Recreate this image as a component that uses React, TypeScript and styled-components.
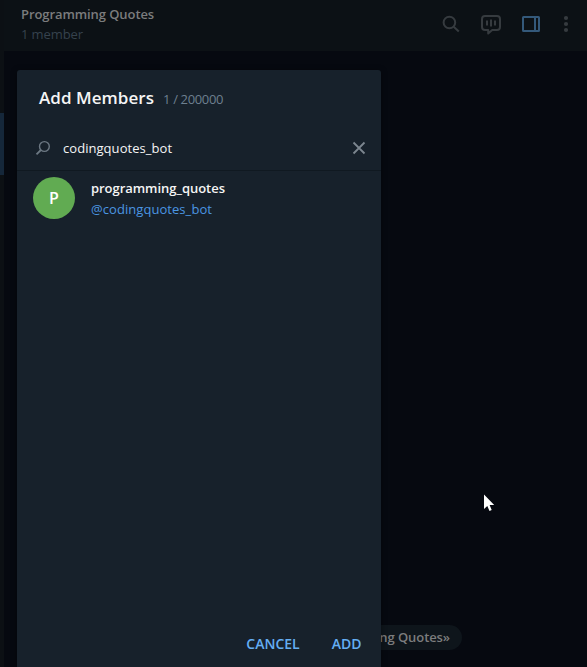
import React from 'react';
import styled, { createGlobalStyle } from 'styled-components';

const GlobalStyle = createGlobalStyle`
  *, *::before, *::after { box-sizing: border-box; }
  html, body { margin: 0; background: #060910; overflow: hidden; }
  body, button, input { font-family: 'Open Sans', 'Noto Sans', sans-serif; font-size: 13px; }
  button { border: 0; background: none; padding: 0; }
`;

const Window = styled.div`
  position: relative;
  display: flex;
  width: 587px;
  height: 667px;
  overflow: hidden;
  background: #060910;
`;

const ChatListEdge = styled.aside`
  width: 4px;
  padding-top: 113px;
  background: #0c1014;
`;

const SelectedChat = styled.div`
  height: 62px;
  background: #15273a;
`;

const Chat = styled.main`
  flex: 1;
  display: flex;
  flex-direction: column;
`;

const ChatHeader = styled.header`
  display: flex;
  justify-content: space-between;
  height: 51px;
  padding: 4px 6px 0 17px;
  background: #0c1115;
`;

const ChatTitle = styled.div`
  font-weight: 600;
  line-height: 20px;
  letter-spacing: -0.08px;
  color: #7b7c7d;
`;

const ChatStatus = styled.div`
  line-height: 20px;
  letter-spacing: -0.1px;
  color: #36424d;
`;

const HeaderTools = styled.div`
  display: flex;
  align-items: flex-start;
  padding-top: 8px;
`;

const Tool = styled.button<{ $width: number; $active?: boolean }>`
  display: flex;
  justify-content: center;
  width: ${p => p.$width}px;
  color: ${p => (p.$active ? '#34597a' : '#363b3f')};
`;

const Messages = styled.section`
  flex: 1;
  display: flex;
  flex-direction: column;
  justify-content: flex-end;
  align-items: flex-end;
  padding: 0 125px 17px 0;
`;

const ServiceMessage = styled.div`
  height: 25px;
  padding: 0 12px;
  border-radius: 13px;
  background: #0e151b;
  color: #7b7c7d;
  font-weight: 600;
  line-height: 25px;
  letter-spacing: -0.08px;
  white-space: nowrap;
`;

const Dialog = styled.section`
  position: absolute;
  left: 17px;
  top: 70px;
  display: flex;
  flex-direction: column;
  width: 364px;
  height: 597px;
  border-radius: 3px 3px 0 0;
  background: #17212b;
  box-shadow: 0 1px 6px rgba(0, 0, 0, 0.4);
`;

const DialogTitle = styled.div`
  display: flex;
  align-items: baseline;
  gap: 9px;
  height: 56px;
  padding: 15px 22px 0;
`;

const Heading = styled.h1`
  margin: 0;
  font-size: 17px;
  font-weight: 600;
  line-height: 26px;
  letter-spacing: 0.05px;
  color: #f5f5f5;
`;

const Counter = styled.span`
  letter-spacing: -0.35px;
  color: #6d7f8f;
`;

const SearchRow = styled.div`
  display: flex;
  align-items: center;
  height: 45px;
  padding: 0 15px 0 18px;
  border-bottom: 1px solid #101921;
`;

const SearchInput = styled.input`
  flex: 1;
  min-width: 0;
  height: 24px;
  margin-left: 12px;
  padding: 0;
  border: 0;
  outline: 0;
  background: transparent;
  letter-spacing: 0.05px;
  color: #f5f5f5;
`;

const Member = styled.div`
  display: flex;
  gap: 16px;
  padding: 6px 16px;
`;

const Avatar = styled.div`
  width: 42px;
  height: 42px;
  border-radius: 50%;
  background: #61ab52;
  color: #fff;
  font-size: 16px;
  font-weight: 600;
  line-height: 43px;
  text-align: center;
`;

const MemberName = styled.div`
  margin-top: 1px;
  font-weight: 600;
  line-height: 21px;
  letter-spacing: -0.04px;
  color: #f5f5f5;
`;

const MemberHandle = styled.div`
  line-height: 21px;
  letter-spacing: 0.06px;
  color: #4b96e2;
`;

const Actions = styled.footer`
  display: flex;
  justify-content: flex-end;
  gap: 32px;
  margin-top: auto;
  padding: 0 19.5px 13px;
`;

const Action = styled.button`
  font-size: 14px;
  font-weight: 600;
  line-height: 20px;
  color: #64aef3;
`;

const Cursor = styled.svg`
  position: absolute;
  left: 483px;
  top: 494px;
`;

export default function App() {
  return (
    <>
      <GlobalStyle />
      <Window>
        <ChatListEdge><SelectedChat /></ChatListEdge>
        <Chat>
          <ChatHeader>
            <div>
              <ChatTitle>Programming Quotes</ChatTitle>
              <ChatStatus>1 member</ChatStatus>
            </div>
            <HeaderTools>
              <Tool $width={40} aria-label="Search">
                <svg width="20" height="24" fill="none" stroke="currentColor" strokeWidth="2">
                  <circle cx="8.4" cy="10.5" r="5.8" />
                  <path d="M12.7 14.8 L17.8 19.6" />
                </svg>
              </Tool>
              <Tool $width={40} aria-label="Live stream">
                <svg width="22" height="24" fill="none" stroke="currentColor" strokeWidth="2" strokeLinejoin="round">
                  <path d="M5 4 H17 Q20 4 20 7 V15 Q20 18 17 18 H12.2 L8.2 21.5 V18 H5 Q2 18 2 15 V7 Q2 4 5 4 Z" />
                  <path d="M7 8.5 V13.5 M11 7.5 V14.5 M15 8.5 V13.5" />
                </svg>
              </Tool>
              <Tool $width={40} $active aria-label="Side panel">
                <svg width="20" height="24" fill="none" stroke="currentColor" strokeWidth="2">
                  <rect x="2" y="5" width="16" height="14" rx="0.5" />
                  <path d="M14 5 V19" />
                </svg>
              </Tool>
              <Tool $width={30} aria-label="Menu">
                <svg width="6" height="24" fill="currentColor">
                  <circle cx="3" cy="6" r="2.1" />
                  <circle cx="3" cy="12" r="2.1" />
                  <circle cx="3" cy="18" r="2.1" />
                </svg>
              </Tool>
            </HeaderTools>
          </ChatHeader>
          <Messages>
            <ServiceMessage>ng Quotes»</ServiceMessage>
          </Messages>
        </Chat>

        <Dialog role="dialog">
          <DialogTitle>
            <Heading>Add Members</Heading>
            <Counter>1 / 200000</Counter>
          </DialogTitle>
          <SearchRow>
            <svg width="16" height="16" fill="none" stroke="#6c7883" strokeWidth="1.4">
              <circle cx="9.4" cy="6.5" r="4.9" />
              <path d="M5.9 10 L1.5 14.4" strokeWidth="1.8" />
            </svg>
            <SearchInput defaultValue="codingquotes_bot" spellCheck={false} />
            <svg width="14" height="14" stroke="#7c868f" strokeWidth="1.8">
              <path d="M1.5 1.5 L12.5 12.5 M12.5 1.5 L1.5 12.5" />
            </svg>
          </SearchRow>
          <Member>
            <Avatar>P</Avatar>
            <div>
              <MemberName>programming_quotes</MemberName>
              <MemberHandle>@codingquotes_bot</MemberHandle>
            </div>
          </Member>
          <Actions>
            <Action>CANCEL</Action>
            <Action>ADD</Action>
          </Actions>
        </Dialog>

        <Cursor width="13" height="20">
          <path d="M1 0.5 V15 L4.3 12 L6.5 17 L8.7 16 L6.6 11 H11.2 Z" fill="#fff" />
        </Cursor>
      </Window>
    </>
  );
}
